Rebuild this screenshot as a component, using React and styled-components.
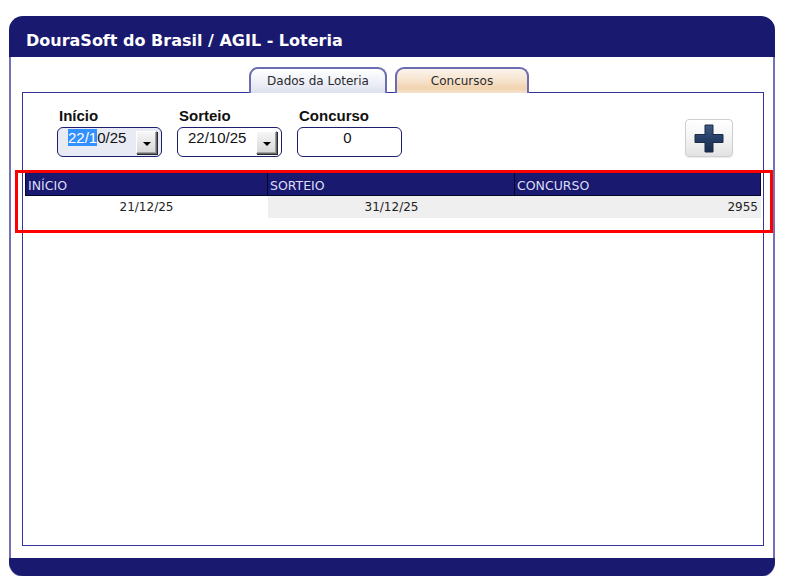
import React from "react";
import styled, { createGlobalStyle } from "styled-components";

const GlobalStyle = createGlobalStyle`
  html, body { margin: 0; padding: 0; background: #ffffff; }
  * { box-sizing: border-box; }
  body { font-family: "DejaVu Sans", Verdana, sans-serif; }
`;

const Page = styled.div`
  padding: 16px 0 0 9px;
`;

const Frame = styled.div`
  width: 766px;
  display: flex;
  flex-direction: column;
`;

const TitleBar = styled.div`
  height: 41px;
  background: #191970;
  border-radius: 14px 14px 0 0;
  color: #ffffff;
  font-family: "DejaVu Sans", Verdana, sans-serif;
  font-weight: bold;
  font-size: 16px;
  line-height: 19px;
  padding: 15px 0 0 17px;
  white-space: nowrap;
`;

const Body = styled.div`
  height: 501px;
  background: #ffffff;
  border-left: 2px solid #7272b4;
  border-right: 2px solid #7272b4;
  padding: 10px 9px 12px 11px;
  display: flex;
  flex-direction: column;
`;

const Footer = styled.div`
  height: 18px;
  background: #191970;
  border-radius: 0 0 14px 14px;
  box-shadow: 0 1px 0 #8a8ac4;
`;

const TabBar = styled.div`
  display: flex;
  gap: 8px;
  padding-left: 227px;
  margin-bottom: -1px;
  position: relative;
  z-index: 1;
`;

const Tab = styled.div`
  width: ${(p) => p.$w}px;
  height: 26px;
  border: 2px solid #6c6cb0;
  border-bottom: none;
  border-radius: 9px 9px 0 0;
  background: ${(p) =>
    p.$active
      ? "linear-gradient(to bottom, #fbf4ec 0%, #f5e0c8 55%, #f1d2ae 80%, #f6e4d0 100%)"
      : "linear-gradient(to bottom, #ffffff 0%, #eef0f8 55%, #dde1ee 100%)"};
  font-family: "DejaVu Sans", Verdana, sans-serif;
  font-size: 12px;
  color: #2a2a2a;
  display: flex;
  justify-content: center;
  padding-top: 5px;
  line-height: 15px;
`;

const Panel = styled.div`
  flex: 1;
  border: 1px solid #34349a;
  background: #ffffff;
  display: flex;
  flex-direction: column;
`;

const FormRow = styled.div`
  display: flex;
  align-items: flex-start;
  padding: 14px 30px 0 34px;
  gap: 15px;
`;

const Field = styled.div`
  display: flex;
  flex-direction: column;
  gap: 3px;
`;

const Label = styled.div`
  font-family: "Liberation Sans", Arial, sans-serif;
  font-weight: bold;
  font-size: 15px;
  line-height: 17px;
  color: #111111;
  padding-left: 2px;
`;

const InputBox = styled.div`
  width: 105px;
  height: 30px;
  border: 1px solid #1e1e6e;
  border-radius: 6px;
  background: ${(p) => (p.$focused ? "#e8eaf4" : "#ffffff")};
  display: flex;
  justify-content: ${(p) => (p.$center ? "center" : "flex-start")};
  padding: 0 4px 0 ${(p) => (p.$center ? 0 : 10)}px;
  font-family: "Liberation Sans", Arial, sans-serif;
  font-size: 15px;
  color: #111111;
`;

const InputText = styled.div`
  flex: ${(p) => (p.$center ? "none" : 1)};
  line-height: 15px;
  padding-top: 2px;
  white-space: nowrap;
`;

const Selected = styled.span`
  background: #3390ff;
  color: #ffffff;
`;

const DropButton = styled.div`
  align-self: center;
  width: 21px;
  height: 23px;
  background: linear-gradient(to bottom, #f6f6f6, #d8d8d8);
  border-top: 1px solid #ffffff;
  border-left: 1px solid #ffffff;
  border-right: 1px solid #6a6a6a;
  border-bottom: 1px solid #6a6a6a;
  box-shadow: 1px 1px 0 #2a2a2a, inset -1px -1px 0 #a0a0a0;
  display: flex;
  align-items: center;
  justify-content: center;
  padding-top: 3px;

  &::after {
    content: "";
    border-left: 4px solid transparent;
    border-right: 4px solid transparent;
    border-top: 4px solid #000000;
  }
`;

const AddButton = styled.button`
  margin-left: auto;
  margin-top: 12px;
  width: 48px;
  height: 38px;
  border: 1px solid #cfcfcf;
  border-radius: 4px;
  background: linear-gradient(to bottom, #ffffff 0%, #f4f4f4 50%, #e2e2e2 100%);
  display: flex;
  align-items: center;
  justify-content: center;
  padding: 0;
  box-shadow: 0 1px 1px rgba(0, 0, 0, 0.08);
`;

const GridWrap = styled.div`
  position: relative;
  margin: 16px 2px 0 2px;
`;

const Grid = styled.div`
  display: grid;
  grid-template-columns: 243px 247px 1fr;
`;

const HeadCell = styled.div`
  height: 23px;
  background: #191970;
  border-left: ${(p) => (p.$first ? "1px solid #05052a" : "none")};
  border-right: 1px solid #05052a;
  border-bottom: 1px solid #05052a;
  color: #dedef6;
  font-family: "DejaVu Sans", Verdana, sans-serif;
  font-size: 12.5px;
  line-height: 20px;
  padding: 3px 0 0 2px;
  white-space: nowrap;
  overflow: hidden;
`;

const Cell = styled.div`
  height: 22px;
  background: ${(p) => (p.$shade ? "#efefef" : "#ffffff")};
  font-family: "DejaVu Sans", Verdana, sans-serif;
  font-size: 12px;
  line-height: 21px;
  padding-top: 1px;
  color: #222222;
  text-align: ${(p) => p.$align || "center"};
  padding-right: ${(p) => (p.$align === "right" ? 3 : 0)}px;
`;

const Highlight = styled.div`
  position: absolute;
  top: -3px;
  left: -10px;
  right: -12px;
  bottom: -15px;
  border: 3px solid #ff0000;
  pointer-events: none;
`;

const PlusIcon = () => (
  <svg width="30" height="29" viewBox="0 0 30 29">
    <defs>
      <linearGradient id="pg" x1="0" y1="0" x2="0" y2="1">
        <stop offset="0" stopColor="#3d5a86" />
        <stop offset="0.5" stopColor="#263f66" />
        <stop offset="1" stopColor="#1a2c4c" />
      </linearGradient>
    </defs>
    <path
      d="M11 1 H19 V10.5 H29 V18.5 H19 V28 H11 V18.5 H1 V10.5 H11 Z"
      fill="url(#pg)"
      stroke="#1b2a46"
      strokeWidth="1"
      strokeLinejoin="round"
    />
  </svg>
);

export default function App() {
  return (
    <>
      <GlobalStyle />
      <Page>
        <Frame>
          <TitleBar>DouraSoft do Brasil / AGIL - Loteria</TitleBar>
          <Body>
            <TabBar>
              <Tab $w={138}>Dados da Loteria</Tab>
              <Tab $w={134} $active>
                Concursos
              </Tab>
            </TabBar>
            <Panel>
              <FormRow>
                <Field>
                  <Label>Início</Label>
                  <InputBox $focused>
                    <InputText>
                      <Selected>22/1</Selected>0/25
                    </InputText>
                    <DropButton />
                  </InputBox>
                </Field>
                <Field>
                  <Label>Sorteio</Label>
                  <InputBox>
                    <InputText>22/10/25</InputText>
                    <DropButton />
                  </InputBox>
                </Field>
                <Field>
                  <Label>Concurso</Label>
                  <InputBox $center>
                    <InputText $center>0</InputText>
                  </InputBox>
                </Field>
                <AddButton aria-label="Adicionar">
                  <PlusIcon />
                </AddButton>
              </FormRow>
              <GridWrap>
                <Grid>
                  <HeadCell $first>INÍCIO</HeadCell>
                  <HeadCell>SORTEIO</HeadCell>
                  <HeadCell>CONCURSO</HeadCell>
                  <Cell>21/12/25</Cell>
                  <Cell $shade>31/12/25</Cell>
                  <Cell $shade $align="right">
                    2955
                  </Cell>
                </Grid>
                <Highlight />
              </GridWrap>
            </Panel>
          </Body>
          <Footer />
        </Frame>
      </Page>
    </>
  );
}
